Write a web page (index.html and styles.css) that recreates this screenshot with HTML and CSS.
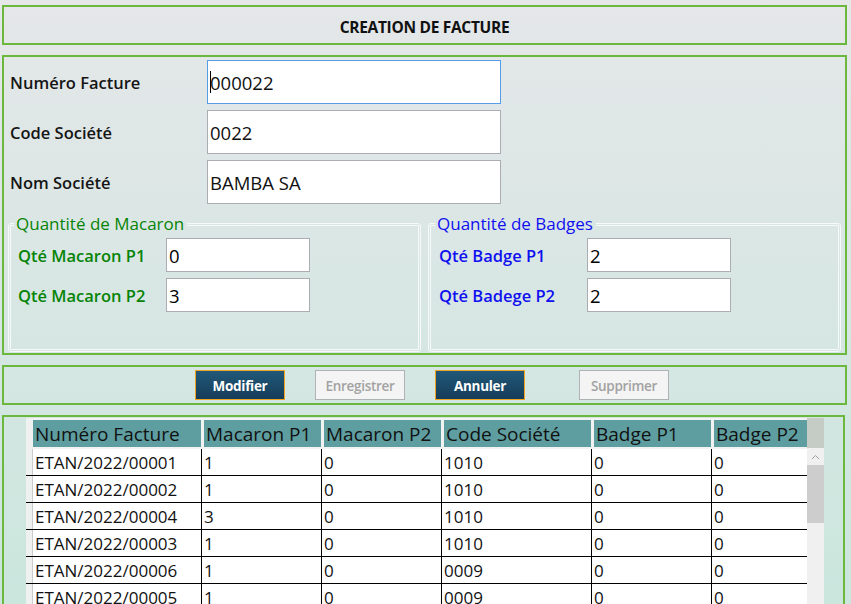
FILE: index.html
```html
<!DOCTYPE html>
<html lang="fr">
<head>
<meta charset="utf-8">
<title>Création de facture</title>
<link rel="stylesheet" href="styles.css">
</head>
<body>
<div class="page">
  <header class="panel title-bar"><h1>CREATION DE FACTURE</h1></header>

  <section class="panel form-panel">
    <div class="fields">
      <div class="field-row">
        <label class="lbl" for="num">Numéro Facture</label>
        <div class="input-wrap"><input id="num" class="txt big focused" value="000022"><span class="caret"></span></div>
      </div>
      <div class="field-row">
        <label class="lbl" for="code">Code Société</label>
        <div class="input-wrap"><input id="code" class="txt big" value="0022"></div>
      </div>
      <div class="field-row">
        <label class="lbl" for="nom">Nom Société</label>
        <div class="input-wrap"><input id="nom" class="txt big" value="BAMBA SA"></div>
      </div>
    </div>
    <div class="groups">
      <fieldset class="group green">
        <legend>Quantité de Macaron</legend>
        <div class="qrow"><label for="m1">Qté Macaron P1</label><input id="m1" class="txt small" value="0"></div>
        <div class="qrow"><label for="m2">Qté Macaron P2</label><input id="m2" class="txt small" value="3"></div>
      </fieldset>
      <fieldset class="group blue">
        <legend>Quantité de Badges</legend>
        <div class="qrow"><label for="b1">Qté Badge P1</label><input id="b1" class="txt small" value="2"></div>
        <div class="qrow"><label for="b2">Qté Badege P2</label><input id="b2" class="txt small" value="2"></div>
      </fieldset>
    </div>
  </section>

  <section class="panel actions">
    <button class="btn primary">Modifier</button>
    <button class="btn disabled" disabled>Enregistrer</button>
    <button class="btn primary">Annuler</button>
    <button class="btn disabled far" disabled>Supprimer</button>
  </section>

  <section class="panel grid-panel">
    <div class="datagrid">
      <div class="grid-body">
        <div class="grow head">
          <div class="rh"></div>
          <div class="hc c1">Numéro Facture</div>
          <div class="hc c2">Macaron P1</div>
          <div class="hc c3">Macaron P2</div>
          <div class="hc c4">Code Société</div>
          <div class="hc c5">Badge P1</div>
          <div class="hc c6">Badge P2</div>
        </div>
        <div class="grow"><div class="rh"></div><div class="bc d1">ETAN/2022/00001</div><div class="bc d2">1</div><div class="bc d3">0</div><div class="bc d4">1010</div><div class="bc d5">0</div><div class="bc d6">0</div></div>
        <div class="grow"><div class="rh"></div><div class="bc d1">ETAN/2022/00002</div><div class="bc d2">1</div><div class="bc d3">0</div><div class="bc d4">1010</div><div class="bc d5">0</div><div class="bc d6">0</div></div>
        <div class="grow"><div class="rh"></div><div class="bc d1">ETAN/2022/00004</div><div class="bc d2">3</div><div class="bc d3">0</div><div class="bc d4">1010</div><div class="bc d5">0</div><div class="bc d6">0</div></div>
        <div class="grow"><div class="rh"></div><div class="bc d1">ETAN/2022/00003</div><div class="bc d2">1</div><div class="bc d3">0</div><div class="bc d4">1010</div><div class="bc d5">0</div><div class="bc d6">0</div></div>
        <div class="grow"><div class="rh"></div><div class="bc d1">ETAN/2022/00006</div><div class="bc d2">1</div><div class="bc d3">0</div><div class="bc d4">0009</div><div class="bc d5">0</div><div class="bc d6">0</div></div>
        <div class="grow"><div class="rh"></div><div class="bc d1">ETAN/2022/00005</div><div class="bc d2">1</div><div class="bc d3">0</div><div class="bc d4">0009</div><div class="bc d5">0</div><div class="bc d6">0</div></div>
      </div>
      <div class="vscroll">
        <div class="sb-corner"></div>
        <div class="sb-arrow"><svg width="9" height="6" viewBox="0 0 9 6"><path d="M1 5 L4.5 1.5 L8 5" fill="none" stroke="#a0a0a0" stroke-width="1"/></svg></div>
        <div class="sb-thumb"></div>
        <div class="sb-track"></div>
      </div>
    </div>
  </section>
</div>
</body>
</html>
```

FILE: styles.css
```css
* { box-sizing: border-box; }

html, body {
  margin: 0;
  padding: 0;
  height: 604px;
  overflow: hidden;
}

body {
  font-family: "Open Sans", "Noto Sans", sans-serif;
  color: #1b1b1b;
  background: linear-gradient(#e5e7e9, #cae6dd);
}

.page {
  padding: 5px 0 0 2px;
}

.panel {
  border: 2px solid #6cb83f;
  width: 845px;
  margin-bottom: 10px;
}

/* Title */
.title-bar {
  height: 40px;
  display: flex;
  align-items: center;
  justify-content: center;
  padding-top: 3px;
}
.title-bar h1 {
  margin: 0;
  font-size: 15.5px;
  font-weight: 700;
  letter-spacing: -0.3px;
  color: #111;
}

/* Form */
.form-panel {
  height: 300px;
  padding: 3px 4px 0 4px;
}
.fields {
  display: flex;
  flex-direction: column;
  gap: 6px;
}
.field-row {
  display: grid;
  grid-template-columns: 197px 294px;
  align-items: center;
  padding-left: 2px;
}
.lbl {
  font-size: 16.5px;
  font-weight: 600;
  color: #151515;
}
.input-wrap {
  position: relative;
}
.txt {
  display: block;
  margin: 0;
  border: 1px solid #abadb3;
  background: #fff;
  font-family: "Open Sans", sans-serif;
  color: #111;
  outline: none;
}
.txt.big {
  width: 294px;
  height: 44px;
  font-size: 18.5px;
  padding: 0 0 0 2px;
}
.txt.focused {
  border-color: #569de5;
}
.caret {
  position: absolute;
  left: 3px;
  top: 11px;
  width: 1px;
  height: 22px;
  background: #000;
}

.groups {
  display: flex;
  gap: 7px;
  margin-top: 10px;
}
.group {
  margin: 0;
  width: 413px;
  height: 138px;
  border: 3px double #f7f9f9;
  border-radius: 3px;
  padding: 4px 6px 0 7px;
  display: flex;
  flex-direction: column;
  gap: 6px;
}
.group.blue {
  padding-left: 8px;
}
.group legend {
  font-size: 17px;
  font-weight: 500;
  line-height: 20px;
  margin-left: -4px;
  padding: 0 3px 0 2px;
}
.group.green, .group.green legend { color: #078407; }
.group.blue, .group.blue legend { color: #1010f0; }

.qrow {
  display: grid;
  grid-template-columns: 148px 144px;
  align-items: center;
}
.qrow label {
  font-size: 16.5px;
  font-weight: 600;
}
.txt.small {
  width: 144px;
  height: 34px;
  font-size: 18.5px;
  padding: 0 0 0 2px;
  color: #000;
}

/* Actions */
.actions {
  height: 40px;
  display: flex;
  align-items: center;
  gap: 30px;
  padding-left: 191px;
}
.btn {
  width: 90px;
  height: 30px;
  font-family: "Open Sans", sans-serif;
  font-size: 13.5px;
  font-weight: 700;
  letter-spacing: -0.3px;
  padding: 2px 0 0 0;
  margin: 0;
}
.btn.primary {
  background: linear-gradient(#215878, #163d59);
  border: 1px solid #f2a31e;
  color: #fff;
}
.btn.disabled {
  background: #f4f4f4;
  border: 1px solid #adb2b5;
  color: #a2a2a2;
  font-weight: 600;
}
.btn.far {
  margin-left: 24px;
}

/* Grid */
.grid-panel {
  width: 843px;
  height: 200px;
  padding: 1px 0 0 22px;
  overflow: hidden;
}
.datagrid {
  display: flex;
  width: 798px;
}
.grid-body {
  width: 781px;
  background: #fff;
}
.grow {
  display: flex;
  height: 27px;
  border-bottom: 1px solid #000;
  font-size: 17px;
  line-height: 27px;
}
.grow.head {
  height: 31px;
  padding: 2px 0 2px 0;
  background: #f2f2f2;
  border-bottom: none;
  font-size: 19px;
  line-height: 29px;
}
.rh {
  width: 7px;
  flex: none;
  background: #eef1f0;
  border-right: 1px solid #c9cccb;
}
.head .rh {
  margin: -2px 0;
  background: #eef1f0;
  border-right: none;
}
.hc {
  background: #5f9ea0;
  color: #111;
  padding-left: 2px;
  white-space: nowrap;
  overflow: hidden;
  margin-right: 3px;
}
.hc.c1 { width: 168px; }
.hc.c2 { width: 117px; }
.hc.c3 { width: 117px; }
.hc.c4 { width: 147px; }
.hc.c5 { width: 117px; }
.hc.c6 { width: 93px; margin-right: 0; }

.bc {
  padding-left: 2px;
  border-right: 1px solid #000;
  white-space: nowrap;
  color: #111;
}
.bc.d1 { width: 169px; }
.bc.d2 { width: 120px; }
.bc.d3 { width: 120px; }
.bc.d4 { width: 150px; }
.bc.d5 { width: 120px; }
.bc.d6 { width: 95px; border-right: none; }

.vscroll {
  width: 17px;
  display: flex;
  flex-direction: column;
}
.sb-corner {
  height: 30px;
  background: #c5ccc5;
}
.sb-arrow {
  height: 17px;
  background: #f0f0f0;
  display: flex;
  align-items: center;
  justify-content: center;
}
.sb-thumb {
  height: 58px;
  background: #cdcdcd;
}
.sb-track {
  flex: 1;
  height: 120px;
  background: #f0f0f0;
}
```
